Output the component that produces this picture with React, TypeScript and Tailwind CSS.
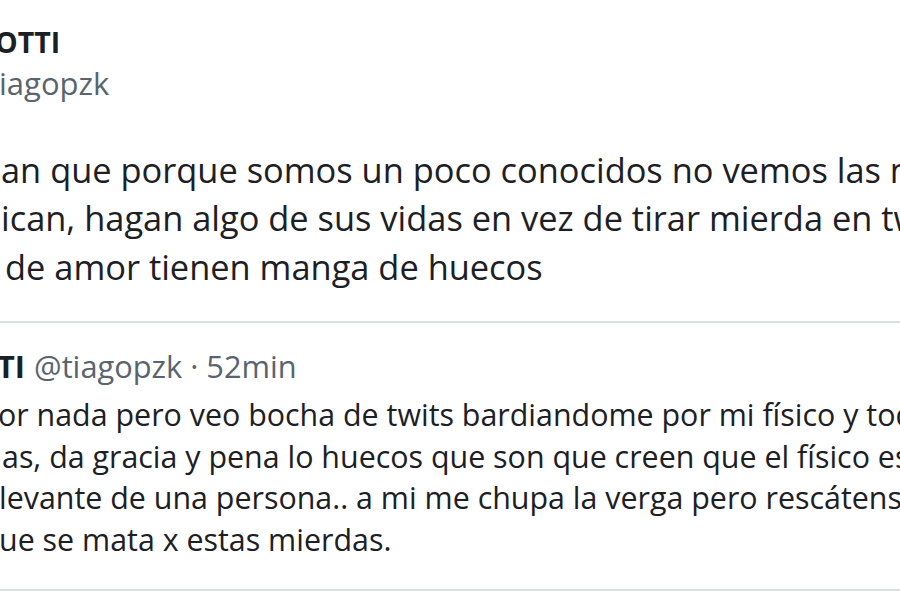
import React from "react";

const font = { fontFamily: '"Open Sans", "Noto Sans", sans-serif' };

export default function App() {
  return (
    <div className="w-[900px] h-[600px] overflow-hidden bg-white text-[#1c2024]" style={font}>
      <div className="pt-[22px]">
        <div className="text-[28.5px] font-bold leading-[41px] whitespace-nowrap -ml-[5px]">OTTI</div>
        <div className="text-[31px] leading-[40px] text-[#59646e] whitespace-nowrap -ml-[1px]">iagopzk</div>
      </div>
      <div className="mt-[42.5px] text-[34.4px] leading-[48.5px] whitespace-nowrap">
        <div className="pl-[1px]">an que porque somos un poco conocidos no vemos las mentiras que</div>
        <div className="pl-[1px]">ican, hagan algo de sus vidas en vez de tirar mierda en twitter</div>
        <div className="pl-[5px]">de amor tienen manga de huecos</div>
      </div>
      <div className="mt-[30px] border-t-2 border-[#dcdfe2]">
        <div className="pt-[23px] text-[30.8px] leading-[40px] whitespace-nowrap flex gap-[9px]">
          <span className="font-bold -ml-[3px]">TI</span>
          <span className="text-[#59646e]">@tiagopzk · 52min</span>
        </div>
        <div className="mt-[8px] text-[30.4px] leading-[41.7px] whitespace-nowrap">
          <div className="-ml-[2px]">or nada pero veo bocha de twits bardiandome por mi físico y todo eso</div>
          <div className="pl-[2px]">as, da gracia y pena lo huecos que son que creen que el físico es lo</div>
          <div className="-ml-[1px]">levante de una persona.. a mi me chupa la verga pero rescátense que</div>
          <div className="-ml-[1px]">ue se mata x estas mierdas.</div>
        </div>
        <div className="mt-[28px] border-t-2 border-[#dcdfe2]" />
      </div>
    </div>
  );
}
